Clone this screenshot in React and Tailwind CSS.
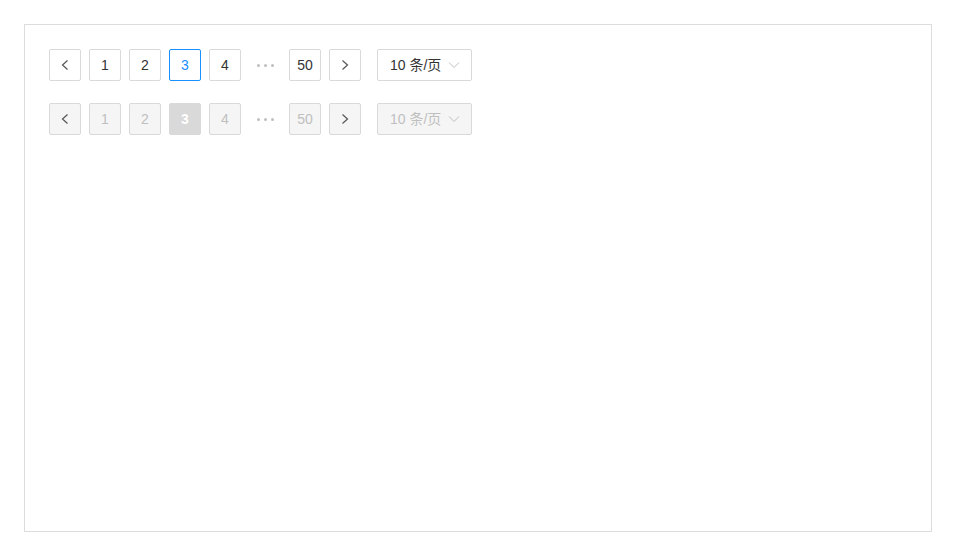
import React from "react";

const font = { fontFamily: '"Liberation Sans", "Noto Sans CJK SC", sans-serif' };

function Chevron({ dir, className, w = 1.2 }) {
  const d =
    dir === "left"
      ? "M8.5 1.5 L3.5 6 L8.5 10.5"
      : dir === "right"
      ? "M3.5 1.5 L8.5 6 L3.5 10.5"
      : "M1 3.5 L6 8.5 L11 3.5";
  return (
    <svg width="12" height="12" viewBox="0 0 12 12" className={className}>
      <path d={d} fill="none" stroke="currentColor" strokeWidth={w} />
    </svg>
  );
}

function Ellipsis({ color }) {
  return (
    <div className="w-8 h-8 flex items-center justify-center gap-[4px]">
      <span className={`w-[3px] h-[3px] rounded-full ${color}`}></span>
      <span className={`w-[3px] h-[3px] rounded-full ${color}`}></span>
      <span className={`w-[3px] h-[3px] rounded-full ${color}`}></span>
    </div>
  );
}

function Row({ disabled }) {
  const base = "w-8 h-8 flex items-center justify-center rounded-[2px] border text-sm";
  const normal = disabled
    ? "border-[#d9d9d9] bg-[#f5f5f5] text-[#bfbfbf]"
    : "border-[#d9d9d9] bg-white text-[#333333]";
  const active = disabled
    ? "border-[#d9d9d9] bg-[#d9d9d9] text-white font-bold"
    : "border-[#1890ff] bg-white text-[#1890ff]";
  return (
    <div className="flex items-center gap-2">
      <div className={`${base} ${normal}`}>
        <Chevron dir="left" className="text-[#555555]" />
      </div>
      <div className={`${base} ${normal}`}>1</div>
      <div className={`${base} ${normal}`}>2</div>
      <div className={`${base} ${active}`}>3</div>
      <div className={`${base} ${normal}`}>4</div>
      <Ellipsis color="bg-[#bfbfbf]" />
      <div className={`${base} ${normal}`}>50</div>
      <div className={`${base} ${normal}`}>
        <Chevron dir="right" className="text-[#555555]" />
      </div>
      <div
        className={`ml-2 h-8 w-[95px] flex items-center justify-between pl-3 pr-[11px] rounded-[2px] border text-sm ${
          disabled ? "border-[#d9d9d9] bg-[#f5f5f5] text-[#bfbfbf]" : "border-[#d9d9d9] bg-white text-[#333333]"
        }`}
      >
        <span>10 条/页</span>
        <Chevron dir="down" className="text-[#bfbfbf]" w={1} />
      </div>
    </div>
  );
}

export default function App() {
  return (
    <div className="w-[956px] h-[556px] bg-white p-6" style={font}>
      <div className="w-full h-full border border-[#dcdcdc] p-6 flex flex-col gap-[22px]">
        <Row />
        <Row disabled />
      </div>
    </div>
  );
}
